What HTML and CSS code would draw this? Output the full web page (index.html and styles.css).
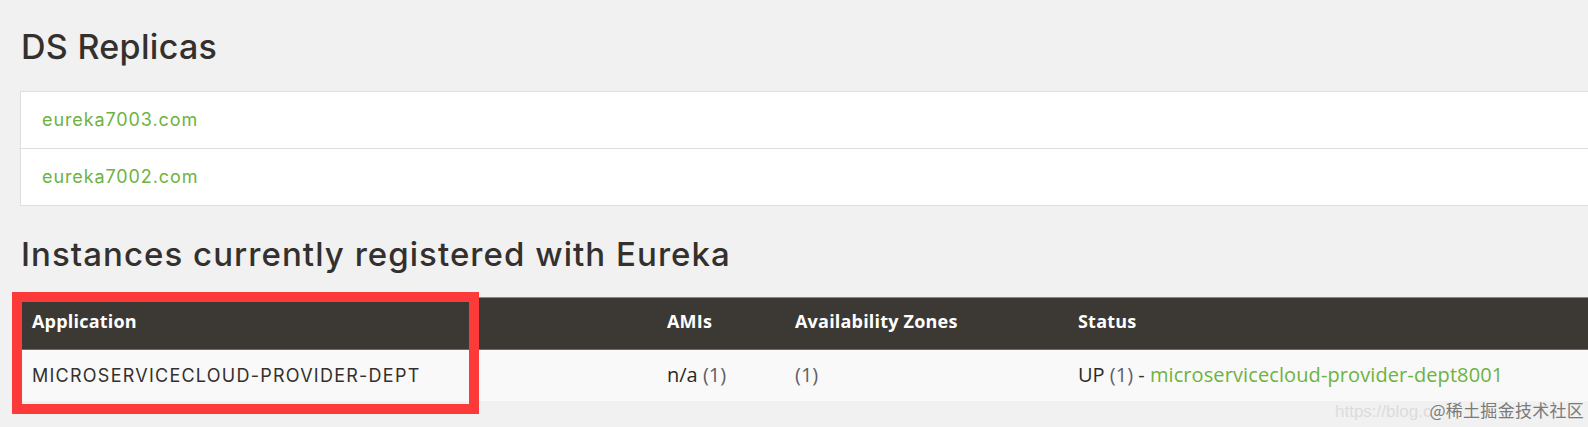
FILE: index.html
```html
<!DOCTYPE html>
<html lang="en">
<head>
<meta charset="utf-8">
<title>Eureka</title>
<link rel="stylesheet" href="styles.css">
</head>
<body>
<div class="page">
  <h1 class="title">DS Replicas</h1>
  <ul class="replicas">
    <li class="replica"><a class="link" href="#">eureka7003.com</a></li>
    <li class="replica"><a class="link" href="#">eureka7002.com</a></li>
  </ul>
  <h2 class="title title-second">Instances currently registered with Eureka</h2>
  <div class="table-wrap">
    <table class="instances">
      <thead>
        <tr>
          <th class="col-app">Application</th>
          <th class="col-ami">AMIs</th>
          <th class="col-zone">Availability Zones</th>
          <th class="col-status">Status</th>
        </tr>
      </thead>
      <tbody>
        <tr>
          <td class="col-app"><span class="app-name">MICROSERVICECLOUD-PROVIDER-DEPT</span></td>
          <td class="col-ami"><span class="strong">n/a</span> <span class="count">(1)</span></td>
          <td class="col-zone"><span class="count">(1)</span></td>
          <td class="col-status"><span class="strong">UP</span> <span class="count">(1)</span> - <a class="link link-ubuntu" href="#">microservicecloud-provider-dept8001</a></td>
        </tr>
      </tbody>
    </table>
    <div class="highlight"></div>
  </div>
</div>
<div class="watermark"><span class="wm-url">https://blog.c</span><span class="wm-site">@稀土掘金技术社区</span></div>
</body>
</html>
```

FILE: styles.css
```css
html, body {
  margin: 0;
  padding: 0;
  overflow: hidden;
  background: #f1f1f1;
}

body {
  width: 1588px;
  height: 427px;
  position: relative;
  font-family: "Inter", "Noto Sans", sans-serif;
  color: #34302d;
}

.page {
  width: 1700px;
  padding-left: 20px;
  box-sizing: border-box;
}

.title {
  margin: 27px 0 24px 0;
  font-size: 34px;
  line-height: 40px;
  font-weight: 500;
  color: #34302d;
  padding-left: 1px;
  letter-spacing: 0.3px;
}

.title-second {
  margin: 0;
  padding-top: 28px;
  padding-bottom: 23px;
  font-size: 33px;
  letter-spacing: 1.05px;
}

.replicas {
  list-style: none;
  margin: 0;
  padding: 0;
  background: #fff;
  border: 1px solid #dedede;
  border-top: 0;
}

.replica {
  height: 56px;
  line-height: 56px;
  border-top: 1px solid #dedede;
  padding-left: 21px;
  font-size: 18px;
  letter-spacing: 0.9px;
}

.link {
  color: #6db33f;
  text-decoration: none;
}

.table-wrap {
  position: relative;
}

.instances {
  width: 100%;
  border-collapse: collapse;
  font-family: "Open Sans", "Noto Sans", sans-serif;
}

.instances th {
  background: #3c3934;
  color: #fff;
  text-align: left;
  font-weight: 700;
  font-size: 18px;
  letter-spacing: 0.2px;
  height: 52px;
  padding: 0 12px 5px 12px;
  border-top: 1px solid #8a8a8a;
  border-bottom: 1px solid #6e6b66;
  box-sizing: border-box;
}

.instances td {
  background: #f9f9f9;
  height: 48px;
  padding: 0 12px 3px 12px;
  font-size: 20px;
  color: #34302d;
}

.col-app { width: 611px; }
.col-ami { width: 104px; }
.col-zone { width: 259px; }

.app-name {
  font-family: "Inter", "Noto Sans", sans-serif;
  font-size: 18px;
  letter-spacing: 1.25px;
}

.strong { color: #2c2926; }

.count { color: #5f5f6a; }

.link-ubuntu {
  font-family: "Open Sans", "Noto Sans", sans-serif;
  letter-spacing: 0.1px;
}

.highlight {
  position: absolute;
  left: -8px;
  top: -5px;
  width: 467px;
  height: 122px;
  box-sizing: border-box;
  border: 10px solid #fd3a3a;
  pointer-events: none;
}

.watermark {
  position: absolute;
  left: 1335px;
  top: 398px;
  white-space: nowrap;
  line-height: 24px;
}

.wm-url {
  font-family: "Liberation Sans", sans-serif;
  font-size: 17px;
  color: #dcdcdc;
}

.wm-site {
  font-family: "Noto Sans CJK SC", sans-serif;
  font-size: 17px;
  letter-spacing: 0.3px;
  color: #7a7a7a;
  margin-left: -2px;
}
```
